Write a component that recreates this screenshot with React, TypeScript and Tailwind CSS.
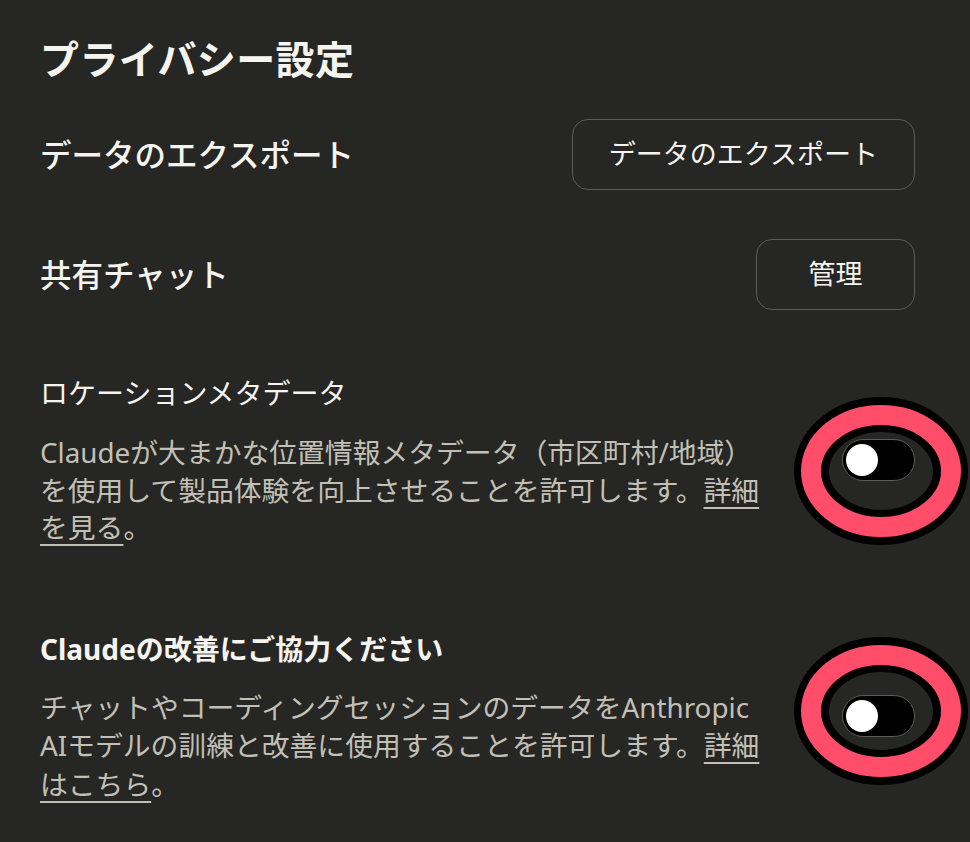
import React from "react";

const font = { fontFamily: '"Noto Sans", "Noto Sans CJK JP", sans-serif' };

const Highlight = ({ top }: { top: number }) => (
  <svg
    width="180"
    height="160"
    viewBox="0 0 180 160"
    className="absolute pointer-events-none"
    style={{ left: -51.5, top }}
  >
    <ellipse cx="90" cy="80" rx="69.5" ry="56.5" fill="none" stroke="#000" strokeWidth="35" />
    <ellipse cx="90" cy="80" rx="70" ry="56" fill="none" stroke="#ff4d6a" strokeWidth="20" />
  </svg>
);

const Toggle = ({ ringTop }: { ringTop: number }) => (
  <div className="relative shrink-0 w-[73px] h-[42px]">
    <div className="w-full h-full rounded-full bg-black border border-[#5c5b56] flex items-center px-[3px]">
      <div className="w-[32px] h-[32px] rounded-full bg-white" />
    </div>
    <Highlight top={ringTop} />
  </div>
);

const Button = ({ label }: { label: string }) => (
  <button className="h-[71px] min-w-[159px] px-[36px] rounded-[16px] border border-[#5c5b56] text-[27px] text-[#f5f4ef]">
    {label}
  </button>
);

export default function App() {
  return (
    <div className="w-[970px] h-[842px] bg-[#262624] text-[#f5f4ef] pl-10 pr-[55px] pt-[33px] overflow-hidden" style={font}>
      <h1 className="text-[39px] font-bold leading-[52px] tracking-[0.4px]">プライバシー設定</h1>

      <div className="mt-[34px] flex items-center justify-between">
        <span className="text-[31.5px] font-medium">データのエクスポート</span>
        <Button label="データのエクスポート" />
      </div>

      <div className="mt-[49px] flex items-center justify-between">
        <span className="text-[31.5px] font-medium">共有チャット</span>
        <Button label="管理" />
      </div>

      <div className="mt-[64px] flex items-center justify-between">
        <div className="w-[735px]">
          <div className="text-[28px] leading-[38px]">ロケーションメタデータ</div>
          <p className="mt-[22px] text-[27.8px] leading-[37.5px] text-[#c2c0b6]">
            Claudeが大まかな位置情報メタデータ（市区町村/地域）を使用して製品体験を向上させることを許可します。
            <a className="underline underline-offset-[6px] decoration-2">詳細を見る</a>。
          </p>
        </div>
        <Toggle ringTop={-48.5} />
      </div>

      <div className="mt-[83px] flex items-center justify-between">
        <div className="w-[735px]">
          <div className="text-[28px] leading-[38px] font-bold">Claudeの改善にご協力ください</div>
          <p className="mt-[20px] text-[27.8px] leading-[38.5px] text-[#c2c0b6]">
            チャットやコーディングセッションのデータをAnthropic AIモデルの訓練と改善に使用することを許可します。
            <a className="underline underline-offset-[6px] decoration-2">詳細はこちら</a>。
          </p>
        </div>
        <Toggle ringTop={-64} />
      </div>
    </div>
  );
}
